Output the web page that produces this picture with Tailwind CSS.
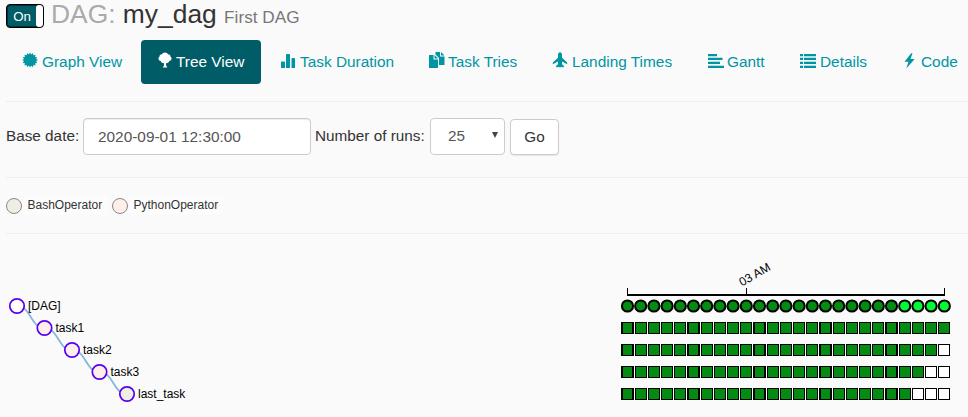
<!DOCTYPE html>
<html lang="en">
<head>
<meta charset="utf-8">
<title>DAG: my_dag</title>
<script src="https://cdn.jsdelivr.net/npm/@tailwindcss/browser@4"></script>
</head>
<body class="w-[968px] h-[417px] overflow-hidden bg-[#fafafa] font-['Liberation_Sans',Arial,sans-serif] text-[15.3px] text-[#333]">
<div class="flex flex-col pl-[6px] h-[417px] overflow-hidden">
  <header class="flex h-[40px] shrink-0 items-start">
    <div class="mt-1 flex h-6 w-[38px] shrink-0 overflow-hidden rounded-[4px] border border-black bg-[#005c66] shadow-[inset_0_0_0_1px_#00333b]">
      <span class="w-[29px] pl-[1px] text-center text-[13.3px] leading-[23px] text-white">On</span>
      <span class="h-full flex-1 rounded-[3px] bg-white"></span>
    </div>
    <h2 class="ml-[7px] whitespace-pre text-[26.4px] leading-[29px]"><span class="text-[#aaa]">DAG:</span> my_dag <small class="text-[17.2px] text-[#777]">First DAG</small></h2>
  </header>
  <nav class="flex h-[44px] shrink-0 gap-[2px] whitespace-nowrap text-[15.4px] leading-[44px] text-[#0095a3]">
    <a class="flex w-[133px] shrink-0 pl-4"><svg class="mt-[12px] mr-1 size-4 shrink-0" viewBox="0 0 16 16" fill="currentColor"><path d="M8 .5l1.100 2.100L11 1l.3 2.300 2.200-.5-.4 2.200 2.200.4-1.300 1.700L16 8l-2 1 1.300 1.900-2.200.3.400 2.300-2.200-.5-.3 2.300-1.900-1.600L8 15.500l-1.100-1.900L5 15.200l-.3-2.200-2.200.5.4-2.300-2.200-.3L2 9 .3 8 2 7.100.7 5.400 2.900 5l-.4-2.200 2.200.5L5 1l1.900 1.600z"/></svg>Graph View</a>
    <a class="flex w-[120px] shrink-0 rounded-[4px] bg-[#005c66] pl-4 text-white"><svg class="mt-[12px] mr-[3px] size-4 shrink-0" viewBox="0 0 16 16" fill="currentColor"><path d="M8 .5c1.400 0 2.500.8 3 1.800 1.600.1 2.700 1.200 2.500 2.400 1 .5 1.300 1.500.9 2.500-.3 1-1.100 1.600-2.100 1.700-.6 1.400-1.600 2.200-3.200 2.300v2.400l1.300 2H5.700l1.300-2v-2.400C5.300 11.100 4.200 10.300 3.700 8.900 2.700 8.800 1.900 8.200 1.600 7.200c-.4-1 0-2 .9-2.500C2.300 3.500 3.400 2.400 5 2.300 5.500 1.300 6.600.5 8 .5z"/></svg>Tree View</a>
    <a class="flex w-[147px] shrink-0 pl-[18px]"><svg class="mt-[13px] mr-[4px] h-4 w-[15px] shrink-0" viewBox="0 0 15 16" fill="currentColor"><path d="M0 9.500q0-1 1-1h2q1 0 1 1V15H0zM5 2q0-1 1-1h2q1 0 1 1v13H5zM10.500 6q0-1 1-1H13q1 0 1 1v9h-3.500z"/></svg>Task Duration</a>
    <a class="flex w-[122px] shrink-0 pl-[17px]"><svg class="mt-[12px] mr-[3px] h-4 w-[16px] shrink-0" viewBox="0 0 16 16" fill="currentColor"><path d="M0 3h4.500v4.500H9V16H0zM5.500 3L9 6.500H5.500zM6.500 0H11v4.500h4.500V13H10V6L6.500 2.500zM12 0l3.500 3.500H12z"/></svg>Task Tries</a>
    <a class="flex w-[153px] shrink-0 pl-4"><svg class="mt-[12px] mr-1 size-4 shrink-0" viewBox="0 0 16 16" fill="currentColor"><path d="M8 .3c1.200 0 2 1.200 2 3v2.400l4.700 4.300q.8.700.5 2.200L10 9.500v2.800l1.800 1.400v1.800L9 14.800l-1 1-1-1-2.800.7v-1.800L6 12.300V9.500L.8 12.200Q.5 10.700 1.300 10L6 5.700V3.300C6 1.500 6.800.3 8 .3z"/></svg>Landing Times</a>
    <a class="flex w-[91px] shrink-0 pl-[17px]"><svg class="mt-[13px] mr-[3px] size-4 shrink-0" viewBox="0 0 16 16" fill="currentColor"><path d="M0 1h9v2.300H0zM0 4.700h14.500V7H0zM0 8.700h12V11H0zM0 12.700h16V15H0z"/></svg>Gantt</a>
    <a class="flex w-[99px] shrink-0 pl-4"><svg class="mt-[13px] mr-1 size-4 shrink-0" viewBox="0 0 16 16" fill="currentColor"><path d="M0 1h3v2.300H0zM4 1h12v2.300H4zM0 4.700h3V7H0zM4 4.700h12V7H4zM0 8.700h3V11H0zM4 8.700h12V11H4zM0 12.700h3V15H0zM4 12.700h12V15H4z"/></svg>Details</a>
    <a class="flex w-[91px] shrink-0 pl-[17px]"><svg class="mt-[13px] mr-[3px] size-4 shrink-0" viewBox="0 0 16 16" fill="currentColor"><path d="M9.200.3L2.500 8.700h4L4.300 15.500 12.700 6H8.500L10.500 .3z"/></svg>Code</a>
  </nav>
  <hr class="mt-[17px] border-[#eee]">
  <form class="mt-4 flex h-[37px] shrink-0 items-start whitespace-nowrap">
    <label class="w-[77px] leading-[35px]">Base date:</label>
    <input class="h-[37px] w-[228px] rounded-[4px] border border-[#ccc] bg-white px-[14px] text-[15.4px] text-[#555] shadow-[inset_0_1px_1px_rgba(0,0,0,0.075)]" value="2020-09-01 12:30:00">
    <label class="ml-[4px] w-[115px] leading-[35px]">Number of runs:</label>
    <div class="flex h-[37px] w-[75px] items-center rounded-[4px] border border-[#ccc] bg-white pl-[17px] text-[#555]"><span>25</span><svg class="mb-[3px] ml-[27px] h-[6px] w-[6px]" viewBox="0 0 6 6" fill="#444"><path d="M0 0h6L3 6z"/></svg></div>
    <button type="button" class="mt-px ml-[5px] h-[36px] w-[49px] rounded-[4px] border border-[#ccc] bg-white text-[#333] shadow-[0_1px_1px_rgba(0,0,0,0.08)]">Go</button>
  </form>
  <hr class="mt-[22px] border-[#eee]">
  <div class="mt-[17px] flex h-5 shrink-0 items-center text-[12px]">
    <span class="mt-px size-4 rounded-full border border-[#888] bg-[#f0ede4]"></span>
    <span class="ml-[1px] h-5 w-[85px] rounded-[4px] bg-[#fcfcfc] pl-[4.5px] leading-[20px]">BashOperator</span>
    <span class="mt-px ml-[4px] size-4 rounded-full border border-[#888] bg-[#ffefeb]"></span>
    <span class="ml-[1px] h-5 w-[94px] rounded-[4px] bg-[#fcfcfc] pl-[4.5px] leading-[20px]">PythonOperator</span>
  </div>
  <hr class="mt-[18px] border-[#eee]">
  <svg id="tree" class="-ml-[6px] h-[183px] w-[968px] shrink-0" viewBox="0 234 968 183" font-size="12" fill="#000"></svg>
</div>
<script>
const out = [];
const nodes = [['[DAG]', '#fff'], ['task1', '#ffefeb'], ['task2', '#ffefeb'], ['task3', '#ffefeb'], ['last_task', '#f0ede4']];
for (let i = 0; i < 4; i++) {
  const x = 17 + 27.5 * i, y = 306 + 22 * i;
  out.push(`<path d="M${x} ${y}C${x + 13.75} ${y} ${x + 13.75} ${y + 22} ${x + 27.5} ${y + 22}" fill="none" stroke="#85b8dc" stroke-width="1.8"/>`);
}
nodes.forEach(([name, fill], i) => {
  const x = 17 + 27.5 * i, y = 306 + 22 * i;
  out.push(`<circle cx="${x}" cy="${y}" r="7.2" fill="${fill}" stroke="#5500f0" stroke-width="1.7"/><text x="${x + 11}" y="${y + 4}">${name}</text>`);
});
out.push('<path shape-rendering="crispEdges" d="M627 294h318v2H627zM627 288h1v6h-1zM746 288h1v6h-1zM944 288h1v6h-1z"/>');
out.push('<text transform="translate(742 286.500) rotate(-30)">03 AM</text>');
for (let c = 0; c < 25; c++) {
  out.push(`<circle cx="${627.5 + 13.2 * c}" cy="306" r="5.6" fill="${c > 20 ? '#01fa33' : '#048c12'}" stroke="#000" stroke-width="2"/>`);
  const wide = c % 5 === 0;
  const x = 621 + 66 * Math.floor(c / 5) + (wide ? 0 : 1 + 13 * (c % 5));
  for (let r = 0; r < 4; r++) {
    const y = 322 + 22 * r, fill = c + r > 24 ? '#fff' : '#048c12';
    out.push(`<g shape-rendering="crispEdges"><rect x="${x}" y="${y}" width="${wide ? 13 : 12}" height="12"/><rect x="${x + (wide ? 2 : 1)}" y="${y + 1}" width="${wide ? 9 : 10}" height="10" fill="${fill}"/></g>`);
  }
}
document.getElementById('tree').innerHTML = out.join('');
</script>
</body>
</html>
